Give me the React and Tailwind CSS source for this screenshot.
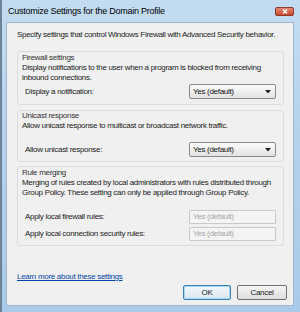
import React from "react";

const Dropdown = ({ value }) => (
    <div className="w-[87px] h-[15px] flex items-center justify-between pl-[3px] pr-[4px] border border-[#8a8a8a] rounded-[2px] bg-gradient-to-b from-[#fbfbfb] to-[#e3e3e3] text-[#111]">
        <span>{value}</span>
        {/* small down arrow */}
        <svg width="6" height="4" viewBox="0 0 6 4">
            <path d="M0 0 H6 L3 3.5 Z" fill="#222" />
        </svg>
    </div>
);

const DisabledBox = ({ value }) => (
    <div className="w-[87px] h-[14px] flex items-center pl-[3px] border border-[#c6c9cc] rounded-[1px] bg-[#f4f4f4] text-[#a6a6a6]">
        {value}
    </div>
);

const Group = ({ title, children, className = "" }) => (
    <div className={`mx-[10px] mr-[9px] border border-[#d9dde0] rounded-[3px] pl-[4px] pr-[7px] ${className}`}>
        <div className="text-[#333]">{title}</div>
        {children}
    </div>
);

const App = () => {
    return (
        <div className="w-[300px] h-[312px] flex flex-col border-l-2 border-[#6f8298] bg-gradient-to-b from-[#c3dcf1] via-[#b3d1ec] to-[#a9cbe9] font-['Liberation_Sans',Arial,sans-serif] text-[8px] leading-[10px] tracking-[-0.3px] text-[#222]">
            {/* Title bar */}
            <div className="h-[22px] flex items-center justify-between pl-[6px] pr-[6px]">
                <span className="text-[9px] tracking-[-0.25px] text-black">Customize Settings for the Domain Profile</span>
                <div className="w-[19px] h-[9px] mt-[1px] flex items-center justify-center rounded-[2px] border border-[#8c3a2c] bg-gradient-to-b from-[#e58a72] to-[#c9452a]">
                    <svg width="6" height="5" viewBox="0 0 6 5">
                        <path d="M1 0.5 L5 4.5 M5 0.5 L1 4.5" stroke="#fff" strokeWidth="1.3" />
                    </svg>
                </div>
            </div>

            {/* Client area */}
            <div className="flex-1 ml-[4px] mr-[6px] mb-[6px] bg-[#f0f0f0] border border-[#9fb6cc] flex flex-col">
                <p className="pl-[10px] pt-[7px]">Specify settings that control Windows Firewall with Advanced Security behavior.</p>

                <Group title="Firewall settings" className="mt-[11px] pt-[1px] pb-[5px]">
                    <p>
                        Display notifications to the user when a program is blocked from receiving
                        <br />
                        inbound connections.
                    </p>
                    <div className="flex items-center justify-between mt-[1px] pl-[3px]">
                        <span>Display a notification:</span>
                        <Dropdown value="Yes (default)" />
                    </div>
                </Group>

                <Group title="Unicast response" className="mt-[5px] pt-0 pb-[4px]">
                    <p>Allow unicast response to multicast or broadcast network traffic.</p>
                    <div className="flex items-center justify-between mt-[11px] pl-[3px]">
                        <span>Allow unicast response:</span>
                        <Dropdown value="Yes (default)" />
                    </div>
                </Group>

                <Group title="Rule merging" className="mt-[4px] pt-[1px] pb-[4px]">
                    <p>
                        Merging of rules created by local administrators with rules distributed through
                        <br />
                        Group Policy. These setting can only be applied through Group Policy.
                    </p>
                    <div className="flex items-center justify-between mt-[12px] pl-[3px]">
                        <span>Apply local firewall rules:</span>
                        <DisabledBox value="Yes (default)" />
                    </div>
                    <div className="flex items-center justify-between mt-[3px] pl-[3px]">
                        <span>Apply local connection security rules:</span>
                        <DisabledBox value="Yes (default)" />
                    </div>
                </Group>

                <a href="#" className="mt-[26px] ml-[10px] self-start text-[#0645ad] underline">
                    Learn more about these settings
                </a>

                <div className="flex justify-end gap-[6px] mt-[3px] pr-[6px]">
                    <button className="w-[48px] h-[15px] rounded-[2px] border border-[#3c7fb1] bg-gradient-to-b from-[#f4f9fc] to-[#d8e6f0] shadow-[inset_0_0_0_1px_#a7d7f5]">
                        OK
                    </button>
                    <button className="w-[50px] h-[15px] rounded-[2px] border border-[#707070] bg-gradient-to-b from-[#f6f6f6] to-[#dddddd]">
                        Cancel
                    </button>
                </div>
            </div>
        </div>
    );
};

export default App;
